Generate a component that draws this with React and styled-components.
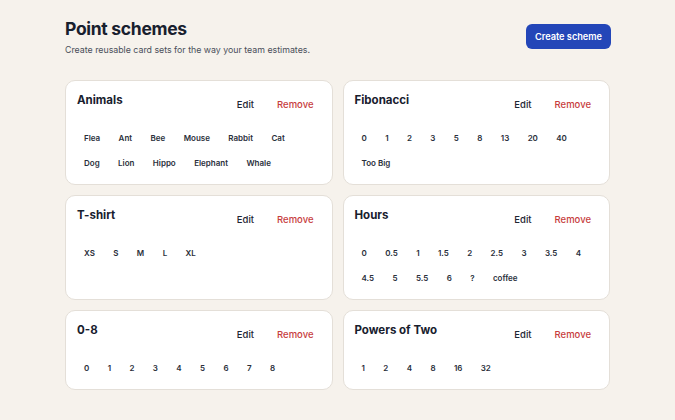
import React from 'react';
import styled, { createGlobalStyle } from 'styled-components';

const GlobalStyle = createGlobalStyle`
  html, body, #root {
    margin: 0;
    padding: 0;
    width: 100%;
    min-height: 100%;
    background: #f6f2ec;
  }
  body {
    font-family: Inter, "Noto Sans", sans-serif;
    color: #1c2232;
  }
`;

const Page = styled.div`
  width: 545px;
  margin: 0 auto;
  padding: 17px 0 20px;
`;

const Header = styled.header`
  display: flex;
  justify-content: space-between;
  align-items: flex-start;
  margin-bottom: 23px;
`;

const Title = styled.h1`
  margin: 0;
  font-size: 17.5px;
  line-height: 24px;
  font-weight: 700;
  letter-spacing: -0.3px;
  color: #18202e;
`;

const Subtitle = styled.p`
  margin: 2px 0 0;
  font-size: 8.8px;
  line-height: 14px;
  color: #4a4f5a;
`;

const PrimaryButton = styled.button`
  margin-top: 7px;
  margin-right: -1px;
  height: 25px;
  padding: 0 9px;
  border: none;
  border-radius: 6px;
  background: #2346b8;
  color: #fff;
  font-family: inherit;
  font-size: 9.2px;
  font-weight: 600;
`;

const Grid = styled.div`
  display: grid;
  grid-template-columns: 1fr 1fr;
  gap: 10px;
`;

const Card = styled.section`
  background: #fff;
  border: 1px solid #e4dfd8;
  border-radius: 10px;
  padding: 12px 11px 10px;
`;

const CardHeader = styled.div`
  display: flex;
  align-items: flex-start;
  height: 24px;
`;

const CardTitle = styled.h2`
  flex: 1;
  margin: 0;
  font-size: 11.5px;
  line-height: 15px;
  font-weight: 700;
  color: #18202e;
`;

const Actions = styled.div`
  display: flex;
  gap: 7px;
  margin-right: -1px;
`;

const TextButton = styled.button`
  height: 22px;
  padding: 0 8px;
  border: none;
  background: transparent;
  font-family: inherit;
  font-size: 9.5px;
  font-weight: 500;
  color: ${p => (p.$danger ? '#c73d3d' : '#1f2533')};
`;

const Values = styled.div`
  display: flex;
  flex-direction: column;
  gap: 4px;
  margin-top: 11px;
`;

const ValueRow = styled.ul`
  display: flex;
  gap: 4.4px;
  margin: 0;
  padding: 0;
  list-style: none;
`;

const Value = styled.li`
  padding: 0 7px;
  line-height: 21px;
  font-size: 8px;
  font-weight: 600;
  color: #2a2f3b;
`;

const schemes = [
  { name: 'Animals', rows: [['Flea', 'Ant', 'Bee', 'Mouse', 'Rabbit', 'Cat'], ['Dog', 'Lion', 'Hippo', 'Elephant', 'Whale']] },
  { name: 'Fibonacci', rows: [['0', '1', '2', '3', '5', '8', '13', '20', '40'], ['Too Big']] },
  { name: 'T-shirt', rows: [['XS', 'S', 'M', 'L', 'XL']] },
  { name: 'Hours', rows: [['0', '0.5', '1', '1.5', '2', '2.5', '3', '3.5', '4'], ['4.5', '5', '5.5', '6', '?', 'coffee']] },
  { name: '0-8', rows: [['0', '1', '2', '3', '4', '5', '6', '7', '8']] },
  { name: 'Powers of Two', rows: [['1', '2', '4', '8', '16', '32']] },
];

function SchemeCard({ scheme }) {
  return (
    <Card>
      <CardHeader>
        <CardTitle>{scheme.name}</CardTitle>
        <Actions>
          <TextButton>Edit</TextButton>
          <TextButton $danger>Remove</TextButton>
        </Actions>
      </CardHeader>
      <Values>
        {scheme.rows.map((row, r) => (
          <ValueRow key={r}>
            {row.map(v => (
              <Value key={v}>{v}</Value>
            ))}
          </ValueRow>
        ))}
      </Values>
    </Card>
  );
}

export default function App() {
  return (
    <>
      <GlobalStyle />
      <Page>
        <Header>
          <div>
            <Title>Point schemes</Title>
            <Subtitle>Create reusable card sets for the way your team estimates.</Subtitle>
          </div>
          <PrimaryButton>Create scheme</PrimaryButton>
        </Header>
        <Grid>
          {schemes.map(s => (
            <SchemeCard key={s.name} scheme={s} />
          ))}
        </Grid>
      </Page>
    </>
  );
}
